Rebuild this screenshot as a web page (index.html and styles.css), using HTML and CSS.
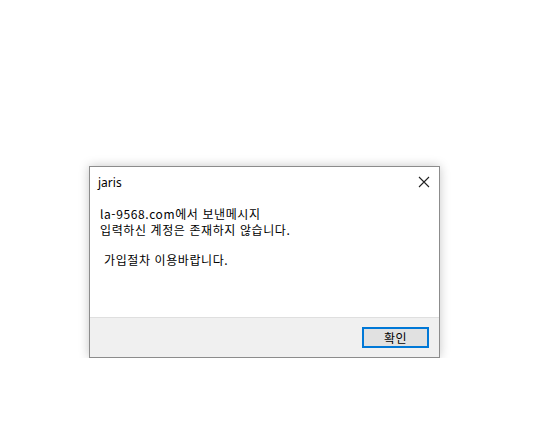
FILE: index.html
```html
<!DOCTYPE html>
<html lang="ko">
<head>
<meta charset="utf-8">
<link rel="stylesheet" href="styles.css">
</head>
<body>
<div class="dialog">
  <div class="titlebar">
    <span class="title">jaris</span>
    <svg class="close" width="12" height="12" viewBox="0 0 12 12"><path d="M1 1 L11 11 M11 1 L1 11" stroke="#222" stroke-width="1.1" fill="none"/></svg>
  </div>
  <div class="content">
    <p class="msg">la-9568.com에서 보낸메시지</p>
    <p class="msg">입력하신 계정은 존재하지 않습니다.</p>
    <p class="msg blank">&nbsp;</p>
    <p class="msg indent">가입절차 이용바랍니다.</p>
  </div>
  <div class="footer">
    <button class="ok">확인</button>
  </div>
</div>
</body>
</html>
```
FILE: styles.css
```css
html, body {
  margin: 0;
  padding: 0;
  background: #ffffff;
}
body {
  padding: 166px 0 0 89px;
  font-family: "Noto Sans CJK KR", "Noto Sans", sans-serif;
  color: #000;
}
.dialog {
  width: 349px;
  height: 190px;
  border: 1px solid #8c8c8c;
  background: #fff;
  box-shadow: 0 0 10px rgba(0, 0, 0, 0.22);
  display: flex;
  flex-direction: column;
}
.titlebar {
  height: 30px;
  display: flex;
  align-items: center;
  justify-content: space-between;
  padding: 0 9px 0 8px;
}
.title {
  font-family: "Noto Sans", "Noto Sans CJK KR", sans-serif;
  font-size: 12px;
  color: #000;
}
.close {
  display: block;
}
.content {
  flex: 1;
  padding: 9px 0 0 10px;
}
.msg {
  margin: 0;
  font-size: 12px;
  line-height: 16px;
  letter-spacing: 0.6px;
  white-space: pre;
}
.blank {
  height: 14px;
  line-height: 14px;
}
.indent {
  padding-left: 4px;
}
.footer {
  height: 40px;
  background: #f0f0f0;
  border-top: 1px solid #dfdfdf;
  display: flex;
  justify-content: flex-end;
  align-items: flex-start;
  padding: 9px 10px 0 0;
  box-sizing: border-box;
}
.ok {
  width: 67px;
  height: 21px;
  box-sizing: border-box;
  border: 2px solid #0078d7;
  background: #e1e1e1;
  font-family: "Noto Sans CJK KR", sans-serif;
  font-size: 12px;
  line-height: 15px;
  letter-spacing: 0.5px;
  padding: 0;
  color: #000;
}
```
